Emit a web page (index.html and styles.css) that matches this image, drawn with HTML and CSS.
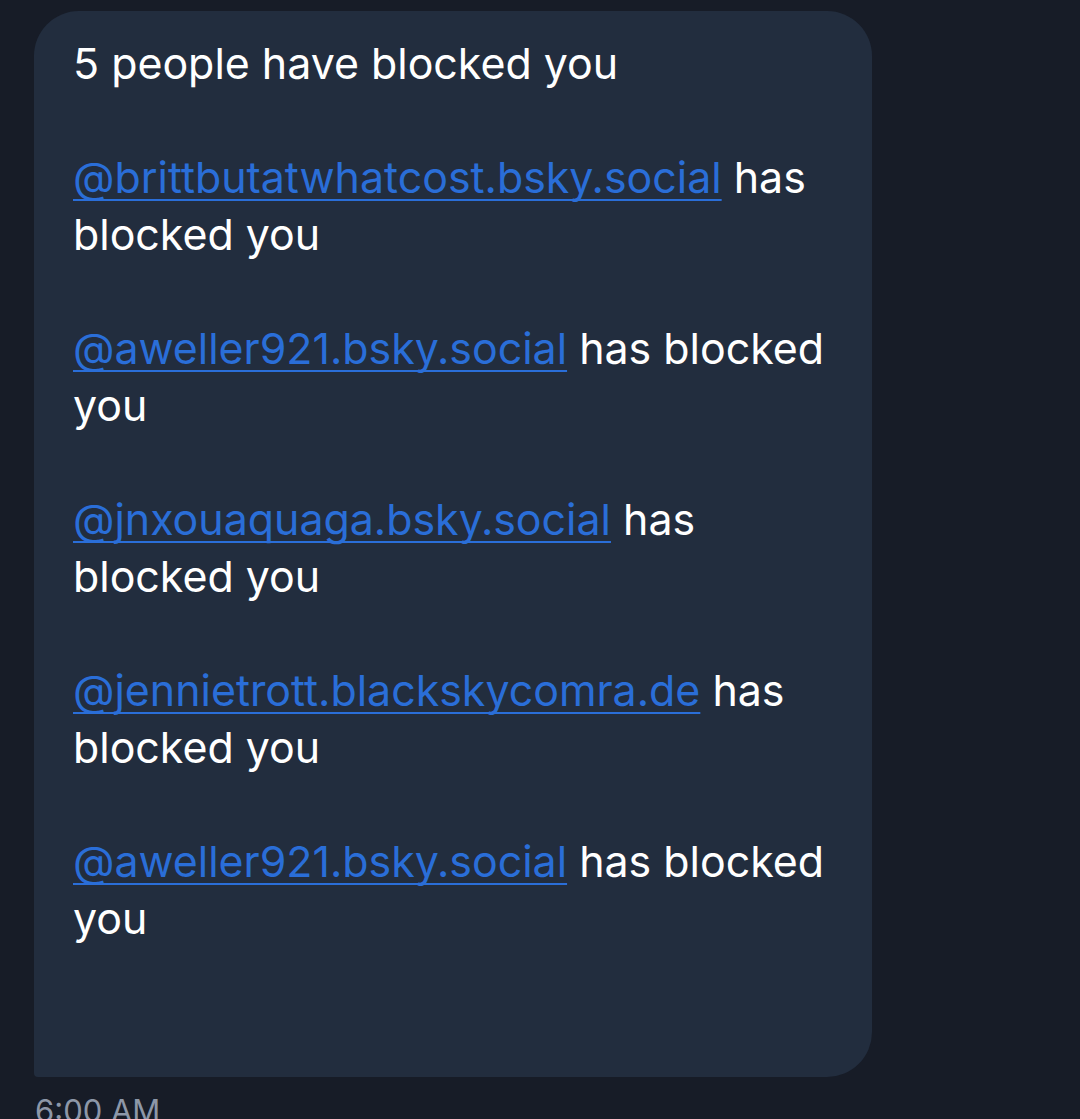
FILE: index.html
```html
<!DOCTYPE html>
<html lang="en">
<head>
<meta charset="utf-8">
<title>Blocked notification</title>
<link rel="stylesheet" href="styles.css">
</head>
<body>
<div class="chat">
  <div class="bubble">
    <p class="line">5 people have blocked you</p>
    <p class="line"><a class="handle" href="#">@brittbutatwhatcost.bsky.social</a> has blocked you</p>
    <p class="line"><a class="handle" href="#">@aweller921.bsky.social</a> has blocked you</p>
    <p class="line"><a class="handle" href="#">@jnxouaquaga.bsky.social</a> has blocked you</p>
    <p class="line"><a class="handle" href="#">@jennietrott.blackskycomra.de</a> has blocked you</p>
    <p class="line"><a class="handle" href="#">@aweller921.bsky.social</a> has blocked you</p>
  </div>
  <div class="time">6:00 AM</div>
</div>
</body>
</html>
```
FILE: styles.css
```css
html, body {
  margin: 0;
  padding: 0;
  background: #171c27;
  height: 100%;
  overflow: hidden;
}
body {
  font-family: Inter, "Noto Sans", sans-serif;
  color: #ffffff;
}
.chat {
  padding: 11px 0 0 34px;
  display: flex;
  flex-direction: column;
  align-items: flex-start;
}
.bubble {
  width: 838px;
  box-sizing: border-box;
  height: 1066px;
  background: #222d3e;
  border-radius: 45px 45px 45px 4px;
  padding: 24px 40px 0 39px;
  font-size: 42.9px;
  line-height: 57px;
}
.line {
  margin: 0 0 57px 0;
}
.handle {
  color: #2a6ed8;
  text-decoration: underline;
  text-decoration-thickness: 2px;
  text-underline-offset: 6px;
  text-decoration-skip-ink: none;
}
.time {
  margin-top: 15px;
  color: #8d97a8;
  font-size: 31px;
  padding-left: 1px;
}
```
